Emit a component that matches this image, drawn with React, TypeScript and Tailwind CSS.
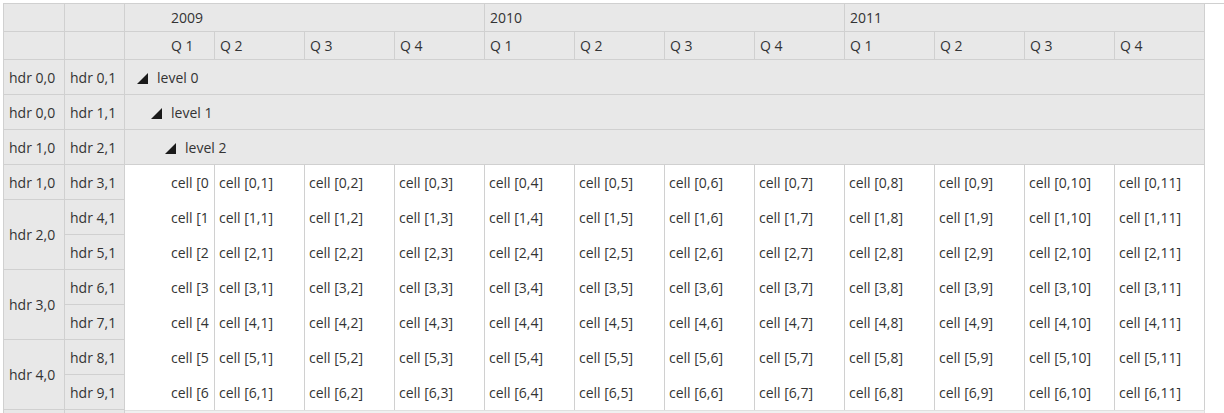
import React from "react";

const years = ["2009", "2010", "2011"];
const quarters = ["Q 1", "Q 2", "Q 3", "Q 4"];
const cols = Array.from({ length: 12 }, (_, i) => i);

const hdr = "flex items-center border-r border-b border-[#d0d0d0] bg-[#e8e8e8] pl-[5px] whitespace-nowrap overflow-hidden";

// column 0 header cells; span = rows covered
const rowHeaders0: { label: string; span: number }[] = [
  { label: "hdr 1,0", span: 1 },
  { label: "hdr 2,0", span: 2 },
  { label: "hdr 3,0", span: 2 },
  { label: "hdr 4,0", span: 2 },
];

function Triangle() {
  return (
    <svg width="11" height="11" viewBox="0 0 11 11" className="mt-[2px] shrink-0">
      <polygon points="11,0 11,11 0,11" fill="#1a1a1a" />
    </svg>
  );
}

function GroupRow({ h0, h1, label, indent }: { h0: string; h1: string; label: string; indent: string }) {
  return (
    <>
      <div className={hdr}>{h0}</div>
      <div className={hdr}>{h1}</div>
      <div className={`col-span-12 flex items-center gap-[9px] border-r border-b border-[#d0d0d0] bg-[#e8e8e8] ${indent}`}>
        <Triangle />
        <span>{label}</span>
      </div>
    </>
  );
}

export default function App() {
  return (
    <div
      className="h-[413px] w-[1224px] overflow-hidden bg-white text-[14px] text-[#333333]"
      style={{ fontFamily: '"Open Sans", "Noto Sans", sans-serif' }}
    >
      <div className="ml-[3px] mt-[3px] border-t border-[#d0d0d0]">
        <div className="grid w-fit grid-cols-[61px_60px_repeat(12,90px)] grid-rows-[28px_28px_repeat(10,35px)_4px] border-l border-[#d0d0d0]">
          {/* year header */}
          <div className={hdr} />
          <div className={hdr} />
          {years.map((y, i) => (
            <div key={y} className={`col-span-4 ${hdr} ${i === 0 ? "pl-[46px]" : "pl-[3px]"}`}>
              {y}
            </div>
          ))}

          {/* quarter header */}
          <div className={hdr} />
          <div className={hdr} />
          {cols.map((c) => (
            <div key={c} className={`${hdr} ${c === 0 ? "pl-[46px]" : "pl-[4px]"}`}>
              {quarters[c % 4]}
            </div>
          ))}

          <GroupRow h0="hdr 0,0" h1="hdr 0,1" label="level 0" indent="pl-[12px]" />
          <GroupRow h0="hdr 0,0" h1="hdr 1,1" label="level 1" indent="pl-[26px]" />
          <GroupRow h0="hdr 1,0" h1="hdr 2,1" label="level 2" indent="pl-[40px]" />

          {/* data rows */}
          {rowHeaders0.map((g, gi) => {
            const startRow = gi === 0 ? 0 : gi * 2 - 1;
            return Array.from({ length: g.span }, (_, k) => {
              const r = startRow + k;
              return (
                <React.Fragment key={r}>
                  {k === 0 && (
                    <div className={`${hdr} ${g.span === 2 ? "row-span-2" : ""}`}>{g.label}</div>
                  )}
                  <div className={`${hdr} pl-[4px]`}>{`hdr ${r + 3},1`}</div>
                  {cols.map((c) => (
                    <div
                      key={c}
                      className={`flex items-center overflow-hidden whitespace-nowrap border-r border-[#d0d0d0] bg-white ${
                        c === 0 ? "pl-[46px]" : "pl-[4px]"
                      }`}
                    >
                      {c === 0 ? `cell [${r}` : `cell [${r},${c}]`}
                    </div>
                  ))}
                </React.Fragment>
              );
            });
          })}

          {/* bottom strip */}
          <div className="border-r border-[#d0d0d0] bg-[#e8e8e8]" />
          <div className="border-r border-[#d0d0d0] bg-[#e8e8e8]" />
          <div className="col-span-12 border-r border-t border-[#e0e0e0] bg-[#f0f0f0]" />
        </div>
      </div>
    </div>
  );
}
